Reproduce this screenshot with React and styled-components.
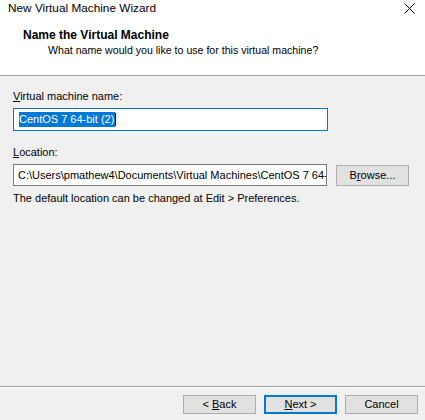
import React from "react";
import styled, { createGlobalStyle } from "styled-components";

const Global = createGlobalStyle`
  html, body { margin: 0; padding: 0; }
  body { font-family: "Liberation Sans", Arial, sans-serif; font-size: 11px; color: #000; }
  * { box-sizing: border-box; }
`;

const Window = styled.div`
  width: 425px;
  height: 420px;
  background: #f0f0f0;
  display: flex;
  flex-direction: column;
  overflow: hidden;
`;

const Header = styled.div`
  background: #fff;
  height: 76px;
  border-bottom: 1px solid #a0a0a0;
  display: flex;
  flex-direction: column;
`;

const TitleBar = styled.div`
  height: 17px;
  display: flex;
  align-items: center;
  justify-content: space-between;
  padding: 0 10px 0 8px;
  font-size: 11.8px;
  line-height: 17px;
`;

const Close = styled.svg`
  width: 11px;
  height: 11px;
`;

const HeadTitle = styled.div`
  margin-top: 11px;
  padding-left: 23px;
  font-weight: bold;
  font-size: 12px;
  line-height: 15px;
`;

const HeadSub = styled.div`
  padding-left: 48px;
  font-size: 10.6px;
  line-height: 15px;
`;

const Body = styled.div`
  flex: 1;
  padding: 13px 13px 0 13px;
  display: flex;
  flex-direction: column;
`;

const Label = styled.div`
  line-height: 15px;
  margin-top: ${(p) => p.$top || 0}px;
`;

const U = styled.span`
  text-decoration: underline;
  text-underline-offset: 1px;
`;

const Input = styled.div`
  width: ${(p) => p.$w}px;
  height: ${(p) => p.$h}px;
  margin-top: ${(p) => p.$top || 0}px;
  background: #fff;
  border: 1px solid ${(p) => (p.$focus ? "#0078d7" : "#7a7a7a")};
  display: flex;
  align-items: center;
  padding-left: ${(p) => p.$pad || 4}px;
  white-space: pre;
  overflow: hidden;
  line-height: 15px;
`;

const Selected = styled.span`
  background: #0078d7;
  color: #fff;
  padding-right: 1px;
`;

const Caret = styled.span`
  display: inline-block;
  width: 1px;
  height: 13px;
  background: #000;
`;

const Row = styled.div`
  display: flex;
  align-items: flex-start;
  gap: 9px;
`;

const Button = styled.button`
  font: inherit;
  color: #000;
  width: ${(p) => p.$w || 73}px;
  height: ${(p) => p.$h || 21}px;
  margin-top: ${(p) => p.$top || 0}px;
  background: #e1e1e1;
  border: ${(p) => (p.$default ? "2px solid #0078d7" : "1px solid #adadad")};
  padding: 0;
  display: flex;
  align-items: center;
  justify-content: center;
  white-space: pre;
  line-height: 15px;
`;

const Footer = styled.div`
  height: 34px;
  border-top: 1px solid #a0a0a0;
  box-shadow: inset 0 1px 0 #fff;
  display: flex;
  justify-content: flex-end;
  align-items: flex-start;
  gap: 8px;
  padding: 8px 7px 0 0;
`;

export default function App() {
  return (
    <Window>
      <Global />
      <Header>
        <TitleBar>
          <span>New Virtual Machine Wizard</span>
          <Close viewBox="0 0 11 11">
            <path d="M0.5 0.5 L10.5 10.5 M10.5 0.5 L0.5 10.5" stroke="#000" strokeWidth="1" fill="none" />
          </Close>
        </TitleBar>
        <HeadTitle>Name the Virtual Machine</HeadTitle>
        <HeadSub>What name would you like to use for this virtual machine?</HeadSub>
      </Header>
      <Body>
        <Label><U>V</U>irtual machine name:</Label>
        <Input $w={315} $h={23} $top={4} $focus $pad={5}>
          <Selected>CentOS 7 64-bit (2)</Selected>
          <Caret />
        </Input>
        <Label $top={14}><U>L</U>ocation:</Label>
        <Row>
          <Input $w={314} $h={22} $top={4} $pad={4}>
            {"C:\\Users\\pmathew4\\Documents\\Virtual Machines\\CentOS 7 64-bit"}
          </Input>
          <Button $top={5} $w={73} $h={21}>
            B<U>r</U>owse...
          </Button>
        </Row>
        <Label $top={5}>The default location can be changed at Edit &gt; Preferences.</Label>
      </Body>
      <Footer>
        <Button $w={73} $h={19}>{"< "}<U>B</U>ack</Button>
        <Button $w={73} $h={19} $default><U>N</U>ext &gt;</Button>
        <Button $w={73} $h={19}>Cancel</Button>
      </Footer>
    </Window>
  );
}
